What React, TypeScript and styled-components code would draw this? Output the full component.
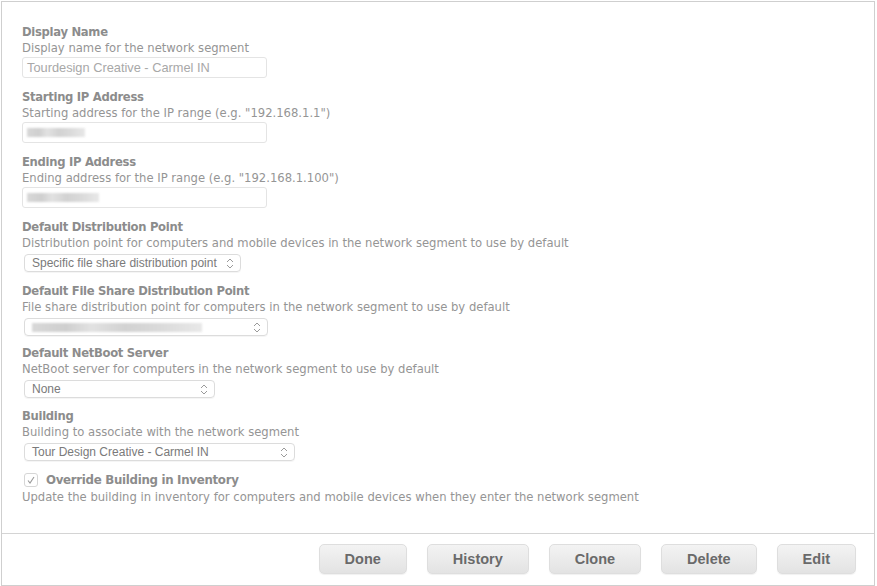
import React from "react";
import styled, { createGlobalStyle } from "styled-components";

const GlobalStyle = createGlobalStyle`
  html, body {
    margin: 0;
    padding: 0;
    background: #ffffff;
  }
  body {
    font-family: "DejaVu Sans", "Liberation Sans", sans-serif;
    -webkit-font-smoothing: antialiased;
  }
`;

const Frame = styled.div`
  box-sizing: border-box;
  width: 874px;
  height: 585px;
  margin: 1px 0 0 1px;
  border: 1px solid #cfcfcf;
  display: flex;
  flex-direction: column;
`;

const Content = styled.div`
  flex: 1;
  padding: 22px 20px 0 20px;
  display: flex;
  flex-direction: column;
`;

const Field = styled.div<{ $gap?: number }>`
  display: flex;
  flex-direction: column;
  align-items: flex-start;
  margin-bottom: ${(p) => p.$gap ?? 10}px;
`;

const Label = styled.div`
  font-size: 11.6px;
  font-weight: bold;
  letter-spacing: -0.3px;
  line-height: 16px;
  color: #8c8c8c;
`;

const Desc = styled.div`
  font-size: 11.6px;
  line-height: 16px;
  color: #959595;
`;

const TextInput = styled.div<{ $w: number }>`
  box-sizing: border-box;
  margin-top: 1px;
  width: ${(p) => p.$w}px;
  height: 21px;
  border: 1px solid #e4e4e4;
  border-radius: 3px;
  padding: 0 4px;
  display: flex;
  align-items: center;
  font-family: "Liberation Sans", Arial, sans-serif;
  font-size: 12.8px;
  color: #a8a8a8;
`;

const Select = styled.div<{ $w: number }>`
  box-sizing: border-box;
  margin-top: 3px;
  margin-left: 2px;
  width: ${(p) => p.$w}px;
  height: 18px;
  border: 1px solid #dcdcdc;
  border-radius: 4px;
  padding: 0 6px 0 7px;
  display: flex;
  align-items: center;
  justify-content: space-between;
  font-family: "Liberation Sans", Arial, sans-serif;
  font-size: 12px;
  color: #7a7a7a;
  box-shadow: 0 1px 0 rgba(0, 0, 0, 0.04);
`;

const Blur = styled.span<{ $w: number }>`
  display: inline-block;
  width: ${(p) => p.$w}px;
  height: 9px;
  background: linear-gradient(
    90deg,
    #d8d8d8 0%,
    #cfcfcf 20%,
    #e2e2e2 35%,
    #d2d2d2 55%,
    #dadada 75%,
    #e8e8e8 100%
  );
  filter: blur(1.2px);
`;

const CheckRow = styled.div`
  display: flex;
  align-items: center;
  gap: 8px;
  margin-top: 10px;
  margin-left: 2px;
  height: 18px;
`;

const CheckBox = styled.span`
  box-sizing: border-box;
  width: 14px;
  height: 14px;
  border: 1px solid #d6d6d6;
  border-radius: 3px;
  display: flex;
  align-items: center;
  justify-content: center;
`;

const CheckLabel = styled.span`
  font-size: 11.8px;
  font-weight: bold;
  letter-spacing: -0.3px;
  color: #8c8c8c;
`;

const Footer = styled.div`
  box-sizing: border-box;
  height: 52px;
  border-top: 1px solid #d4d4d4;
  display: flex;
  justify-content: flex-end;
  align-items: flex-start;
  gap: 20px;
  padding: 10px 18px 0 0;
`;

const Button = styled.button`
  box-sizing: border-box;
  height: 30px;
  padding: 0 25px;
  border: 1px solid #dedede;
  border-radius: 5px;
  background: linear-gradient(#f3f3f3, #e3e3e3);
  font-family: "Liberation Sans", Arial, sans-serif;
  font-weight: bold;
  font-size: 14.5px;
  color: #6a6a6a;
  box-shadow: 0 1px 1px rgba(0, 0, 0, 0.06);
`;

function Chevron() {
  return (
    <svg width="8" height="11" viewBox="0 0 8 11" fill="none">
      <path d="M1 4 L4 1 L7 4" stroke="#9a9a9a" strokeWidth="1" />
      <path d="M1 7 L4 10 L7 7" stroke="#9a9a9a" strokeWidth="1" />
    </svg>
  );
}

function Check() {
  return (
    <svg width="10" height="10" viewBox="0 0 10 10" fill="none">
      <path d="M2 5.5 L4 8 L8 2" stroke="#9a9a9a" strokeWidth="1.1" />
    </svg>
  );
}

export default function App() {
  return (
    <>
      <GlobalStyle />
      <Frame>
        <Content>
          <Field $gap={11}>
            <Label>Display Name</Label>
            <Desc>Display name for the network segment</Desc>
            <TextInput $w={245}>Tourdesign Creative - Carmel IN</TextInput>
          </Field>
          <Field $gap={11}>
            <Label>Starting IP Address</Label>
            <Desc>Starting address for the IP range (e.g. "192.168.1.1")</Desc>
            <TextInput $w={245}>
              <Blur $w={58} />
            </TextInput>
          </Field>
          <Field $gap={11}>
            <Label>Ending IP Address</Label>
            <Desc>Ending address for the IP range (e.g. "192.168.1.100")</Desc>
            <TextInput $w={245}>
              <Blur $w={72} />
            </TextInput>
          </Field>
          <Field $gap={11}>
            <Label>Default Distribution Point</Label>
            <Desc>
              Distribution point for computers and mobile devices in the network
              segment to use by default
            </Desc>
            <Select $w={217}>
              Specific file share distribution point
              <Chevron />
            </Select>
          </Field>
          <Field $gap={9}>
            <Label>Default File Share Distribution Point</Label>
            <Desc>
              File share distribution point for computers in the network segment
              to use by default
            </Desc>
            <Select $w={244}>
              <Blur $w={170} />
              <Chevron />
            </Select>
          </Field>
          <Field>
            <Label>Default NetBoot Server</Label>
            <Desc>NetBoot server for computers in the network segment to use by default</Desc>
            <Select $w={191}>
              None
              <Chevron />
            </Select>
          </Field>
          <Field $gap={0}>
            <Label>Building</Label>
            <Desc>Building to associate with the network segment</Desc>
            <Select $w={271}>
              Tour Design Creative - Carmel IN
              <Chevron />
            </Select>
            <CheckRow>
              <CheckBox>
                <Check />
              </CheckBox>
              <CheckLabel>Override Building in Inventory</CheckLabel>
            </CheckRow>
            <Desc>
              Update the building in inventory for computers and mobile devices
              when they enter the network segment
            </Desc>
          </Field>
        </Content>
        <Footer>
          <Button>Done</Button>
          <Button>History</Button>
          <Button>Clone</Button>
          <Button>Delete</Button>
          <Button>Edit</Button>
        </Footer>
      </Frame>
    </>
  );
}
